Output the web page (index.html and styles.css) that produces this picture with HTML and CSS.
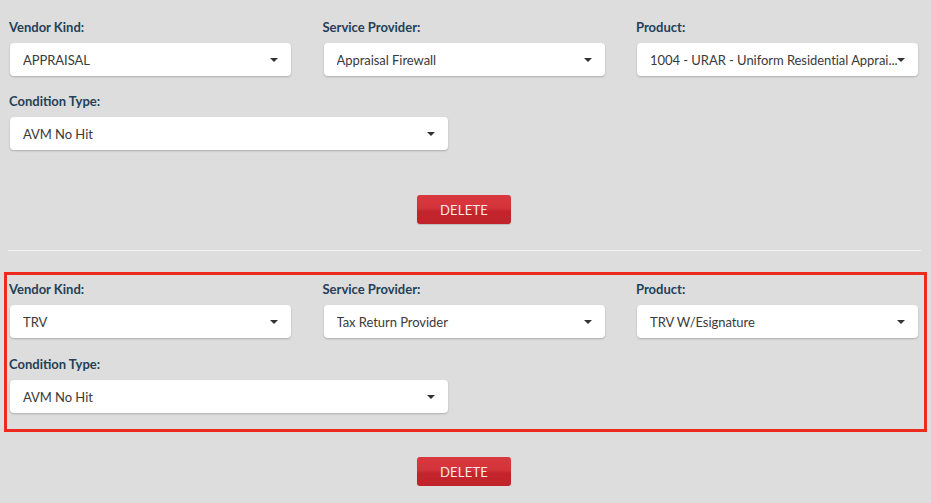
FILE: index.html
```html
<!DOCTYPE html>
<html>
<head>
<meta charset="utf-8">
<link rel="stylesheet" href="styles.css">
</head>
<body>
<div class="page">
  <section class="block">
    <div class="grid">
      <div class="field">
        <div class="label">Vendor Kind:</div>
        <div class="select"><span class="value">APPRAISAL</span><span class="caret"></span></div>
      </div>
      <div class="field">
        <div class="label">Service Provider:</div>
        <div class="select"><span class="value">Appraisal Firewall</span><span class="caret"></span></div>
      </div>
      <div class="field">
        <div class="label">Product:</div>
        <div class="select"><span class="value">1004 - URAR - Uniform Residential Apprai...</span><span class="caret"></span></div>
      </div>
    </div>
    <div class="field wide">
      <div class="label">Condition Type:</div>
      <div class="select"><span class="value">AVM No Hit</span><span class="caret"></span></div>
    </div>
  </section>
  <div class="actions first"><button class="delete">DELETE</button></div>
  <hr class="divider">
  <section class="block highlighted">
    <div class="grid">
      <div class="field">
        <div class="label">Vendor Kind:</div>
        <div class="select"><span class="value">TRV</span><span class="caret"></span></div>
      </div>
      <div class="field">
        <div class="label">Service Provider:</div>
        <div class="select"><span class="value">Tax Return Provider</span><span class="caret"></span></div>
      </div>
      <div class="field">
        <div class="label">Product:</div>
        <div class="select"><span class="value">TRV W/Esignature</span><span class="caret"></span></div>
      </div>
    </div>
    <div class="field wide">
      <div class="label">Condition Type:</div>
      <div class="select"><span class="value">AVM No Hit</span><span class="caret"></span></div>
    </div>
  </section>
  <div class="actions"><button class="delete">DELETE</button></div>
</div>
</body>
</html>
```
FILE: styles.css
```css
* { box-sizing: border-box; }
html, body {
  margin: 0;
  padding: 0;
  background: #dddddd;
  font-family: "Lato", "Noto Sans", sans-serif;
  font-size: 13px;
  color: #333;
}
.page {
  padding: 18px 0 0;
}
.block {
  padding: 0 10px;
}
.grid {
  display: grid;
  grid-template-columns: 281px 281px 281px;
  column-gap: 32.5px;
}
.field {
  display: flex;
  flex-direction: column;
}
.field.wide {
  width: 438px;
  margin-top: 16px;
}
.label {
  font-weight: bold;
  color: #243f58;
  line-height: 18px;
  margin-left: -1px;
  margin-bottom: 7px;
}
.select {
  height: 33px;
  background: #fff;
  border-radius: 4px;
  box-shadow: 0 1px 2px rgba(0, 0, 0, 0.22);
  display: flex;
  align-items: center;
  padding: 0 10px 0 13px;
  color: #3a3a3a;
}
.value {
  flex: 1;
  white-space: nowrap;
  overflow: hidden;
  padding-right: 2px;
  letter-spacing: -0.05px;
}
.caret {
  width: 0;
  height: 0;
  border-left: 4px solid transparent;
  border-right: 4px solid transparent;
  border-top: 4px solid #333;
  flex: none;
  margin-right: 3px;
}
.actions {
  display: flex;
  justify-content: center;
  margin-top: 45px;
}
.actions:not(.first) {
  margin-top: 25px;
}
.delete {
  width: 94px;
  height: 29px;
  border: none;
  border-radius: 3px;
  background: linear-gradient(#d8383d 0%, #d3333a 45%, #c4252c 55%, #c0232a 100%);
  box-shadow: 0 1px 1px rgba(0, 0, 0, 0.15);
  color: #fbe9e9;
  font-family: "Lato", "Noto Sans", sans-serif;
  font-size: 13px;
  letter-spacing: 0.2px;
  padding: 0;
  margin-right: 3px;
}
.divider {
  border: none;
  height: 1px;
  background: #f2f2f2;
  margin: 26px 10px 0 8px;
}
.highlighted {
  margin: 21px 4px 0 4px;
  border: 3px solid #ec2a1d;
  padding: 5px 6px 16px 3px;
}
.highlighted .field.wide {
  margin-top: 17px;
}
```
